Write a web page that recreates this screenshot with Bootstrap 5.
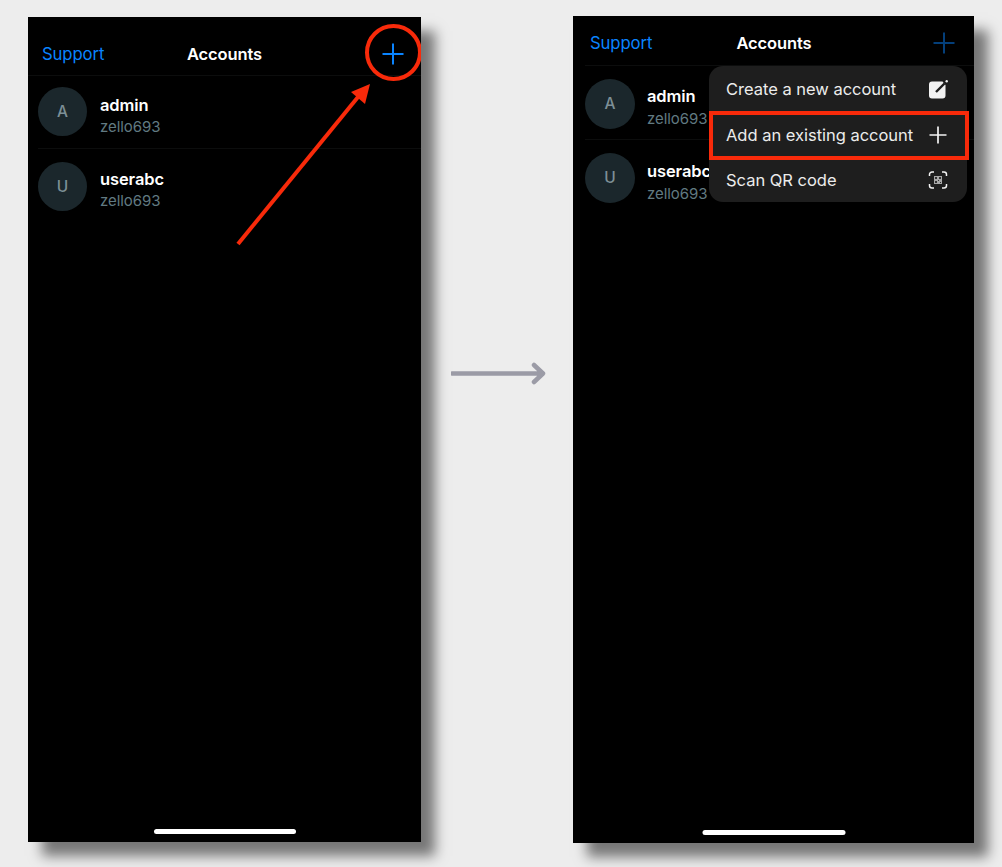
<!DOCTYPE html>
<html lang="en"><head><meta charset="utf-8"><title>Accounts</title>
<link href="https://cdn.jsdelivr.net/npm/bootstrap@5.3.0/dist/css/bootstrap.min.css" rel="stylesheet">
<style>
html,body{height:867px;overflow:hidden}
body{background:#ededed;font-family:Inter,"Liberation Sans",sans-serif;color:#fff}
.stage{height:867px;padding-left:28px}
.phone{background:#000;position:relative;box-shadow:14px 14px 12px rgba(0,0,0,.5);flex:none}
.phone-a{width:393px;height:825px;margin-top:17px}
.phone-b{width:401px;height:827px;margin-top:16px;margin-left:20px}
.gutter{width:132px;flex:none;padding-top:360px;padding-left:30px}
.top-bar{display:grid;grid-template-columns:1fr auto 1fr;align-items:center;border-bottom:1px solid #0c0d0d}
.phone-a .top-bar{height:59px;padding:15px 14px 0}
.phone-b .top-bar{height:50px;padding:4px 16px 0 5px;margin-left:12px}
.support{color:#0a84ff;font-size:16.7px;letter-spacing:-.1px;padding-top:2px}
.title-txt{font-size:16.5px;font-weight:600;letter-spacing:-.1px;padding-top:2px}
.plus{width:24px;height:24px;display:block;justify-self:end;margin-right:2px}
.acct{border-bottom:1px solid #0c0d0d}
.phone-a .acct{height:73px;margin-left:10px;padding-top:11px}
.phone-b .acct{height:74px;margin-left:12px;padding-top:13px}
.phone-a .acct + .acct{border-bottom:0;padding-top:13px}
.phone-b .acct + .acct{border-bottom:0;padding-top:13px}
.avatar{background:#1b272c;color:#7d8f96;border-radius:50%;font-size:15.5px;font-weight:500;flex:none}
.phone-a .avatar{width:49px;height:49px;margin-right:13px}
.phone-b .avatar{width:50px;height:50px;margin-right:12px}
.acct-copy{margin-top:8px}
.phone-a .acct + .acct .acct-copy{margin-top:7px}
.phone-b .acct-copy{margin-top:7px}
.phone-b .acct + .acct .acct-copy{margin-top:8px}
.acct-name{font-size:16.5px;font-weight:600;line-height:20px;letter-spacing:-.1px}
.acct-sub{font-size:15px;line-height:20px;color:#617a82;margin-top:2px;letter-spacing:-.05px}
.phone-b .acct-sub{margin-top:3px}
.home-bar{position:absolute;left:50%;transform:translateX(-50%);height:5px;background:#fff;border-radius:3px}
.phone-a .home-bar{width:142px;bottom:8px}
.phone-b .home-bar{width:143px;bottom:8px}
.popup{position:absolute;left:136px;top:50px;width:258px;height:136px;background:#1e1e1e;border-radius:14px}
.popup-item{height:45.3px;padding:2px 18px 0 17px;font-size:16.5px;color:#ececec;letter-spacing:-.02px}
.ring{position:absolute;left:337px;top:7px;width:57px;height:57px;border:4px solid #f82a0a;border-radius:50%}
.pointer{position:absolute;left:200px;top:60px;width:150px;height:175px}
.callout{position:absolute;left:136px;top:95px;width:260px;height:49px;border:4px solid #f82a0a}
.dim{opacity:.48}
</style></head><body>
<div class="stage d-flex align-items-start">
  <div class="phone phone-a overflow-hidden">
    <div class="top-bar">
      <span class="support">Support</span><span class="title-txt">Accounts</span>
      <svg class="plus" viewBox="0 0 24 24"><path d="M12 1.500v21M1.500 12h21" stroke="#0a84ff" stroke-width="2" fill="none"/></svg>
    </div>
    <div class="acct d-flex align-items-start">
      <div class="avatar d-flex align-items-center justify-content-center">A</div>
      <div class="acct-copy"><div class="acct-name">admin</div><div class="acct-sub">zello693</div></div>
    </div>
    <div class="acct d-flex align-items-start">
      <div class="avatar d-flex align-items-center justify-content-center">U</div>
      <div class="acct-copy"><div class="acct-name">userabc</div><div class="acct-sub">zello693</div></div>
    </div>
    <div class="ring"></div>
    <svg class="pointer" viewBox="0 0 150 175"><path d="M10 167L130 20" stroke="#f82a0a" stroke-width="4" fill="none"/><path d="M142 7L123 15L137 27Z" fill="#f82a0a"/></svg>
    <div class="home-bar"></div>
  </div>
  <div class="gutter">
    <svg width="96" height="26" viewBox="0 0 96 26" class="d-block"><path d="M1 13.500H91M83 5l9 8.500-9 8.500" stroke="#9b9ba6" stroke-width="4.500" fill="none" stroke-linejoin="round" stroke-linecap="round"/></svg>
  </div>
  <div class="phone phone-b overflow-hidden">
    <div class="top-bar">
      <span class="support">Support</span><span class="title-txt">Accounts</span>
      <svg class="plus dim" viewBox="0 0 24 24"><path d="M12 1.500v21M1.500 12h21" stroke="#0a84ff" stroke-width="2" fill="none"/></svg>
    </div>
    <div class="acct d-flex align-items-start">
      <div class="avatar d-flex align-items-center justify-content-center">A</div>
      <div class="acct-copy"><div class="acct-name">admin</div><div class="acct-sub">zello693</div></div>
    </div>
    <div class="acct d-flex align-items-start">
      <div class="avatar d-flex align-items-center justify-content-center">U</div>
      <div class="acct-copy"><div class="acct-name">userabc</div><div class="acct-sub">zello693</div></div>
    </div>
    <div class="popup">
      <div class="popup-item d-flex align-items-center justify-content-between"><span>Create a new account</span>
        <svg width="22" height="22" viewBox="0 0 22 22"><path d="M5 2.500h10.500L18.500 6v10.500a3 3 0 0 1-3 3H5a3 3 0 0 1-3-3V5.500a3 3 0 0 1 3-3z" fill="#f2f2f2"/><path d="M9 13L17.500 4.500" stroke="#1e1e1e" stroke-width="2.400"/><path d="M16 2.500L18.500 2.500 18.500 5.500z" fill="#1e1e1e"/><circle cx="19.700" cy="2.300" r="1.200" fill="#f2f2f2"/></svg></div>
      <div class="popup-item d-flex align-items-center justify-content-between"><span>Add an existing account</span>
        <svg width="22" height="22" viewBox="0 0 22 22"><path d="M11 2.500v17M2.500 11h17" stroke="#f2f2f2" stroke-width="1.700" fill="none"/></svg></div>
      <div class="popup-item d-flex align-items-center justify-content-between"><span>Scan QR code</span>
        <svg width="22" height="22" viewBox="0 0 22 22"><path d="M7 3H5a2.500 2.500 0 0 0-2.500 2.500V7M15 3h2a2.500 2.500 0 0 1 2.500 2.500V7M7 19H5a2.500 2.500 0 0 1-2.500-2.500V15M15 19h2a2.500 2.500 0 0 0 2.500-2.500V15" stroke="#f2f2f2" stroke-width="1.500" fill="none"/><rect x="7" y="7" width="8" height="8" fill="#a8a8a8"/><path d="M8 8h2v2H8zM12 8h2v2h-2zM8 12h2v2H8zM11 11h1v1h-1zM13 13h1v1h-1z" fill="#333"/></svg></div>
    </div>
    <div class="callout"></div>
    <div class="home-bar"></div>
  </div>
</div>
<script src="https://cdn.jsdelivr.net/npm/bootstrap@5.3.0/dist/js/bootstrap.bundle.min.js"></script>
</body></html>
